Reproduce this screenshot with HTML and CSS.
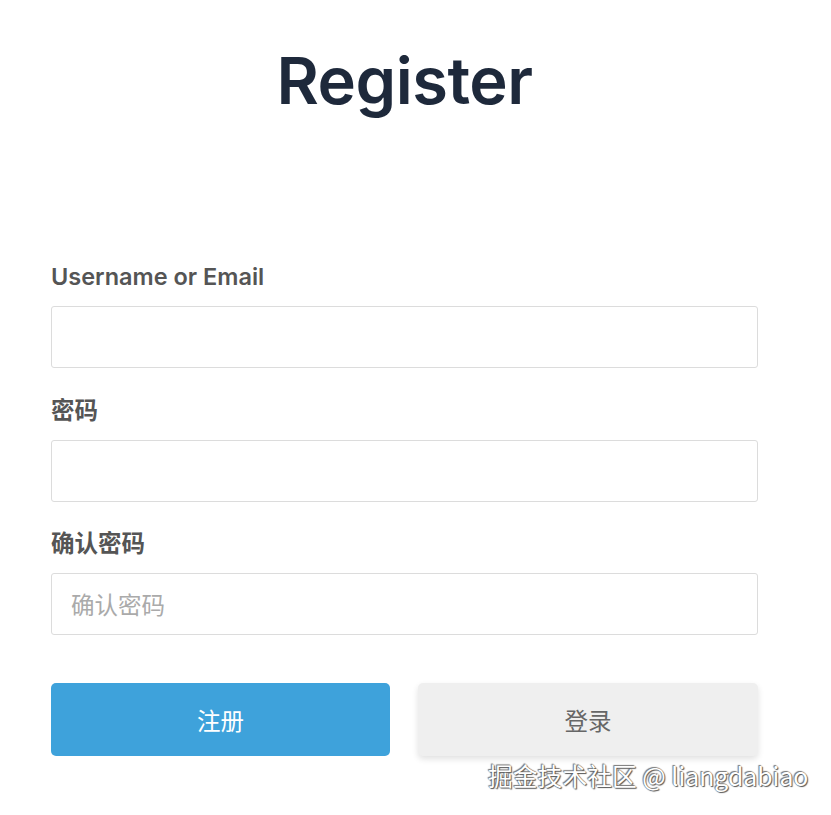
FILE: index.html
```html
<!DOCTYPE html>
<html lang="zh">
<head>
<meta charset="utf-8">
<title>Register</title>
<link rel="stylesheet" href="styles.css">
</head>
<body>
<main class="page">
  <h1 class="title">Register</h1>
  <form class="form">
    <div class="field">
      <label class="label">Username or Email</label>
      <input class="input" type="text">
    </div>
    <div class="field">
      <label class="label">密码</label>
      <input class="input" type="password">
    </div>
    <div class="field">
      <label class="label">确认密码</label>
      <input class="input" type="password" placeholder="确认密码">
    </div>
    <div class="actions">
      <button class="btn btn-primary" type="button">注册</button>
      <button class="btn btn-secondary" type="button">登录</button>
    </div>
  </form>
  <div class="watermark">掘金技术社区 @ liangdabiao</div>
</main>
</body>
</html>
```
FILE: styles.css
```css
html, body {
  margin: 0;
  padding: 0;
  background: #fff;
}
.page {
  position: relative;
  width: 831px;
  height: 815px;
  font-family: Inter, "Noto Sans CJK SC", sans-serif;
}
.title {
  margin: 0;
  padding-top: 41px;
  padding-right: 22px;
  text-align: center;
  font-size: 65px;
  font-weight: 600;
  line-height: 80px;
  color: #1e293b;
  letter-spacing: -0.5px;
}
.form {
  margin: 0 73px 0 51px;
  padding-top: 141px;
}
.field {
  display: flex;
  flex-direction: column;
}
.field + .field {
  margin-top: 27.5px;
}
.label {
  font-size: 23.5px;
  font-weight: 600;
  color: #555;
  line-height: 30px;
  margin-bottom: 14px;
}
.input {
  box-sizing: border-box;
  height: 62px;
  width: 707px;
  border: 1px solid #dcdcdc;
  border-radius: 3px;
  padding: 0 19px;
  font-family: "Noto Sans CJK SC", sans-serif;
  font-size: 23.5px;
  color: #333;
  outline: none;
}
.input::placeholder {
  color: #aaa;
}
.actions {
  display: flex;
  gap: 28px;
  margin-top: 48px;
}
.btn {
  width: 340px;
  height: 73px;
  border: none;
  border-radius: 5px;
  font-family: "Noto Sans CJK SC", sans-serif;
  font-size: 23.5px;
}
.btn-primary {
  background: #3ea2db;
  color: #fff;
  width: 339px;
}
.btn-secondary {
  background: #efefef;
  color: #666;
  box-shadow: 0 3px 6px rgba(0, 0, 0, 0.12);
}
.watermark {
  position: absolute;
  left: 488px;
  top: 758px;
  font-family: "Noto Sans CJK SC", sans-serif;
  font-size: 24.8px;
  line-height: 34px;
  color: #fff;
  text-shadow: 1px 1px 1px #555, -1px -1px 1px #777, 0 0 1px #444;
}
```
